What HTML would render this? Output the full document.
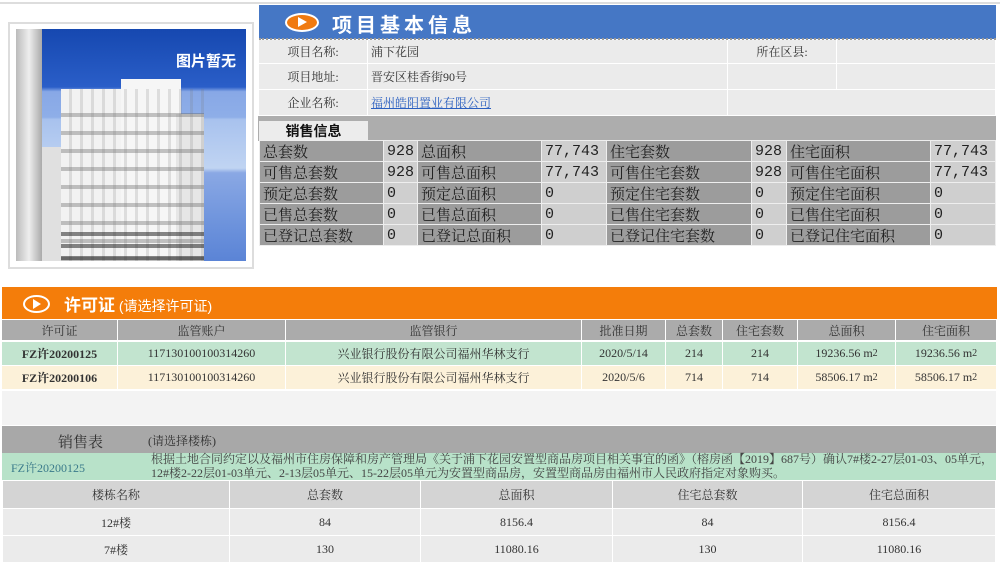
<!DOCTYPE html>
<html><head><meta charset="utf-8"><style>
*{margin:0;padding:0;box-sizing:border-box}
body{width:1000px;height:564px;background:#fff;position:relative;overflow:hidden;font-family:"Liberation Serif","Noto Serif CJK SC",serif;color:#333}
.a{position:absolute}
.c{position:absolute;display:flex;align-items:center;justify-content:center;font-size:12px;white-space:nowrap}
.l{justify-content:flex-start;padding-left:3px}
.s{font-family:"Liberation Mono","Noto Serif CJK SC",serif;font-size:15px;color:#222}
.h{font-family:"Liberation Sans","Noto Sans CJK SC",sans-serif;font-weight:bold}
</style></head><body>
<div class="a" style="left:0;top:2px;width:1000px;height:2px;background:#ddd"></div>
<!-- image -->
<div class="a" style="left:8px;top:22px;width:246px;height:247px;border:2px solid #ddd;background:#fff"></div>
<div class="a" style="left:16px;top:29px;width:230px;height:232px;background:linear-gradient(180deg,#1648b0 0%,#2a5ec8 25%,#88a8e6 27%,#8eaee8 38%,#a8c2ee 39%,#c0d4f2 60%,#8aa8e4 62%,#6c92dc 85%,#5b84d6 100%);overflow:hidden">
 <div class="a" style="left:0;top:0;width:26px;height:232px;background:linear-gradient(90deg,#bbb,#eee,#aaa)"></div>
 <div class="a" style="left:26px;top:118px;width:20px;height:114px;background:#e0e0e0"></div>
 <div class="a" style="left:45px;top:60px;width:60px;height:172px;background:#f2f2f2"></div>
 <div class="a" style="left:105px;top:50px;width:60px;height:182px;background:#f6f6f6"></div>
 <div class="a" style="left:160px;top:85px;width:28px;height:147px;background:#e6e6e6"></div>
 <div class="a" style="left:45px;top:70px;width:143px;height:162px;background:repeating-linear-gradient(180deg,transparent 0 14px,rgba(90,90,90,.35) 14px 18px)"></div>
 <div class="a" style="left:45px;top:60px;width:143px;height:172px;background:repeating-linear-gradient(90deg,transparent 0 8px,rgba(120,120,120,.2) 8px 11px)"></div>
 <div class="a" style="left:45px;top:195px;width:143px;height:37px;background:repeating-linear-gradient(180deg,transparent 0 8px,rgba(20,20,20,.5) 8px 12px)"></div>
 <div class="a h" style="left:160px;top:21px;color:#fff;font-size:15px">图片暂无</div>
</div>
<!-- blue header -->
<div class="a" style="left:259px;top:5px;width:737px;height:34px;background:#4577c5"></div>
<div class="a" style="left:285px;top:13px;width:34px;height:19px;border-radius:50%;background:#f07a10;border:2px solid #fff"></div>
<div class="a" style="left:298px;top:17px;width:0;height:0;border-left:9px solid #fff;border-top:5.5px solid transparent;border-bottom:5.5px solid transparent"></div>
<div class="a h" style="left:332px;top:9px;color:#fff;font-size:20px;letter-spacing:4px">项目基本信息</div>
<div class="a" style="left:259px;top:38px;width:737px;height:2px;border-top:2px dotted #999"></div>
<!-- info rows -->
<div class="a" style="left:259px;top:40px;width:737px;height:76px;background:#fff"></div>
<div class="c" style="left:259px;top:40px;width:108px;height:23px;background:#ebebeb">项目名称:</div>
<div class="c l" style="left:368px;top:40px;width:359px;height:23px;background:#ebebeb">浦下花园</div>
<div class="c" style="left:728px;top:40px;width:108px;height:23px;background:#ebebeb">所在区县:</div>
<div class="c" style="left:837px;top:40px;width:158px;height:23px;background:#ebebeb"></div>
<div class="c" style="left:259px;top:64px;width:108px;height:25px;background:#ebebeb">项目地址:</div>
<div class="c l" style="left:368px;top:64px;width:359px;height:25px;background:#ebebeb">晋安区桂香街90号</div>
<div class="c" style="left:728px;top:64px;width:108px;height:25px;background:#ebebeb"></div>
<div class="c" style="left:837px;top:64px;width:158px;height:25px;background:#ebebeb"></div>
<div class="c" style="left:259px;top:90px;width:108px;height:25px;background:#ebebeb">企业名称:</div>
<div class="c l" style="left:368px;top:90px;width:359px;height:25px;background:#ebebeb;color:#2a5fc0;text-decoration:underline">福州皓阳置业有限公司</div>
<div class="c" style="left:728px;top:90px;width:267px;height:25px;background:#ebebeb"></div>
<div class="a" style="left:258px;top:116px;width:738px;height:25px;background:#adadad"></div>
<div class="c h" style="left:259px;top:121px;width:109px;height:20px;background:#ececec;font-size:14px;color:#111">销售信息</div>
<div class="a" style="left:259px;top:140px;width:737px;height:106px;background:#eee"></div>
<div id="g"></div>
<!-- orange -->
<div class="a" style="left:2px;top:287px;width:995px;height:32px;background:#f47d0a"></div>
<div class="a" style="left:23px;top:295px;width:27px;height:18px;border-radius:50%;border:2px solid #fff;background:#f47d0a"></div>
<div class="a" style="left:33px;top:299px;width:0;height:0;border-left:8px solid #fff;border-top:5px solid transparent;border-bottom:5px solid transparent"></div>
<div class="a h" style="left:64px;top:291px;color:#fff;font-size:17px">许可证<span style="font-size:14px;font-weight:normal"> (请选择许可证)</span></div>
<div id="p"></div>
<div class="a" style="left:2px;top:391px;width:994px;height:34px;background:#f3f3f3"></div>
<div class="a" style="left:2px;top:426px;width:994px;height:27px;background:#a8a8a8"></div>
<div class="a" style="left:58px;top:431px;font-size:15px;color:#333">销售表</div>
<div class="a" style="left:148px;top:432px;font-size:12px;color:#333">(请选择楼栋)</div>
<div class="a" style="left:2px;top:453px;width:994px;height:27px;background:#b8e2c9"></div>
<div class="a" style="left:11px;top:459px;font-size:12px;color:#3a7a8a">FZ许20200125</div>
<div class="a" style="left:151px;top:452px;font-size:12px;line-height:14px;color:#444;white-space:nowrap">根据土地合同约定以及福州市住房保障和房产管理局《关于浦下花园安置型商品房项目相关事宜的函》（榕房函【2019】687号）确认7#楼2-27层01-03、05单元，<br>12#楼2-22层01-03单元、2-13层05单元、15-22层05单元为安置型商品房，安置型商品房由福州市人民政府指定对象购买。</div>
<div id="b"></div>
<script>
function cell(x,y,w,h,bg,t,cls){var d=document.createElement('div');d.className='c '+(cls||'');d.style.cssText='left:'+x+'px;top:'+y+'px;width:'+w+'px;height:'+h+'px;background:'+bg;d.innerHTML=t;document.body.appendChild(d);}
var cols=[[260,123],[384,33],[418,123],[542,64],[607,144],[752,34],[787,143],[931,64]];
var rows=[["总套数","928","总面积","77,743","住宅套数","928","住宅面积","77,743"],["可售总套数","928","可售总面积","77,743","可售住宅套数","928","可售住宅面积","77,743"],["预定总套数","0","预定总面积","0","预定住宅套数","0","预定住宅面积","0"],["已售总套数","0","已售总面积","0","已售住宅套数","0","已售住宅面积","0"],["已登记总套数","0","已登记总面积","0","已登记住宅套数","0","已登记住宅面积","0"]];
rows.forEach(function(r,i){r.forEach(function(t,j){cell(cols[j][0],141+i*21,cols[j][1],20,j%2?'#cfcfcf':'#9c9c9c',t,'l s');});});
var pc=[[2,115],[118,167],[286,295],[582,83],[666,56],[723,74],[798,97],[896,100]];
var ph=["许可证","监管账户","监管银行","批准日期","总套数","住宅套数","总面积","住宅面积"];
var pr=[["<b>FZ许20200125</b>","117130100100314260","兴业银行股份有限公司福州华林支行","2020/5/14","214","214","19236.56 m<sup>2</sup>","19236.56 m<sup>2</sup>"],["<b>FZ许20200106</b>","117130100100314260","兴业银行股份有限公司福州华林支行","2020/5/6","714","714","58506.17 m<sup>2</sup>","58506.17 m<sup>2</sup>"]];
ph.forEach(function(t,j){cell(pc[j][0],320,pc[j][1],20,'#ababab',t);});
pr.forEach(function(r,i){r.forEach(function(t,j){cell(pc[j][0],342+i*24,pc[j][1],23,i?'#fcf1d9':'#c2e4cf',t);});});
var bc=[[3,226],[230,190],[421,191],[613,189],[803,192]];
var bh=["楼栋名称","总套数","总面积","住宅总套数","住宅总面积"];
var br=[["12#楼","84","8156.4","84","8156.4"],["7#楼","130","11080.16","130","11080.16"]];
bh.forEach(function(t,j){cell(bc[j][0],481,bc[j][1],27,'#d4d4d4',t);});
br.forEach(function(r,i){r.forEach(function(t,j){cell(bc[j][0],509+i*27,bc[j][1],26,'#ebebeb',t);});});
</script>
</body></html>
